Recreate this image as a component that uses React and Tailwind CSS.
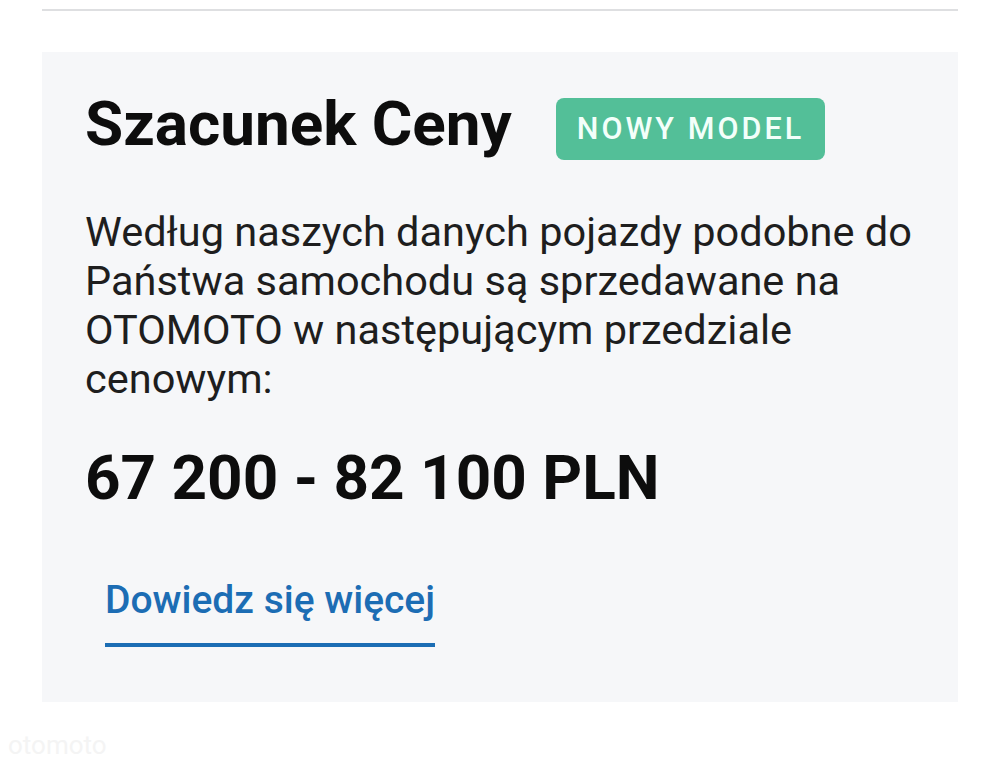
export default function App() {
  return (
    <div className="h-[769px] w-[1000px] bg-white" style={{ fontFamily: "Roboto, 'Noto Sans', sans-serif" }}>
      <div className="px-[42px] pt-[9px]">
        <div className="h-[2px] bg-[#dedfe1]" />
      </div>
      <div className="mx-[42px] mt-[41px] h-[650px] bg-[#f6f7f9] px-[43px] pt-[40px]">
        <div className="flex items-start gap-[44px]">
          <h1 className="text-[62px] font-bold leading-[64px] text-[#0d0d0d]">Szacunek Ceny</h1>
          <span className="mt-[6px] flex h-[62px] items-center rounded-[8px] bg-[#53bf98] px-[21px] text-[30.5px] font-medium tracking-[0.1em] text-[#f3fffa]">
            NOWY MODEL
          </span>
        </div>
        <p className="mt-[47px] w-[870px] text-[41.5px] leading-[49px] text-[#1e1e1e]">
          Według naszych danych pojazdy podobne do Państwa samochodu są sprzedawane na OTOMOTO w następującym przedziale cenowym:
        </p>
        <div className="mt-[43px] text-[62px] font-bold leading-[64px] text-[#0d0d0d]">67 200 - 82 100 PLN</div>
        <div className="ml-[20px] mt-[66px] inline-block border-b-[4px] border-[#1c6db4] pb-[19px]">
          <span className="block text-[39px] font-medium leading-[48px] text-[#1c6db4]">Dowiedz się więcej</span>
        </div>
      </div>
      <div className="px-[8px] pt-[24px] text-[26px] text-[#f4f4f4]">otomoto</div>
    </div>
  );
}
